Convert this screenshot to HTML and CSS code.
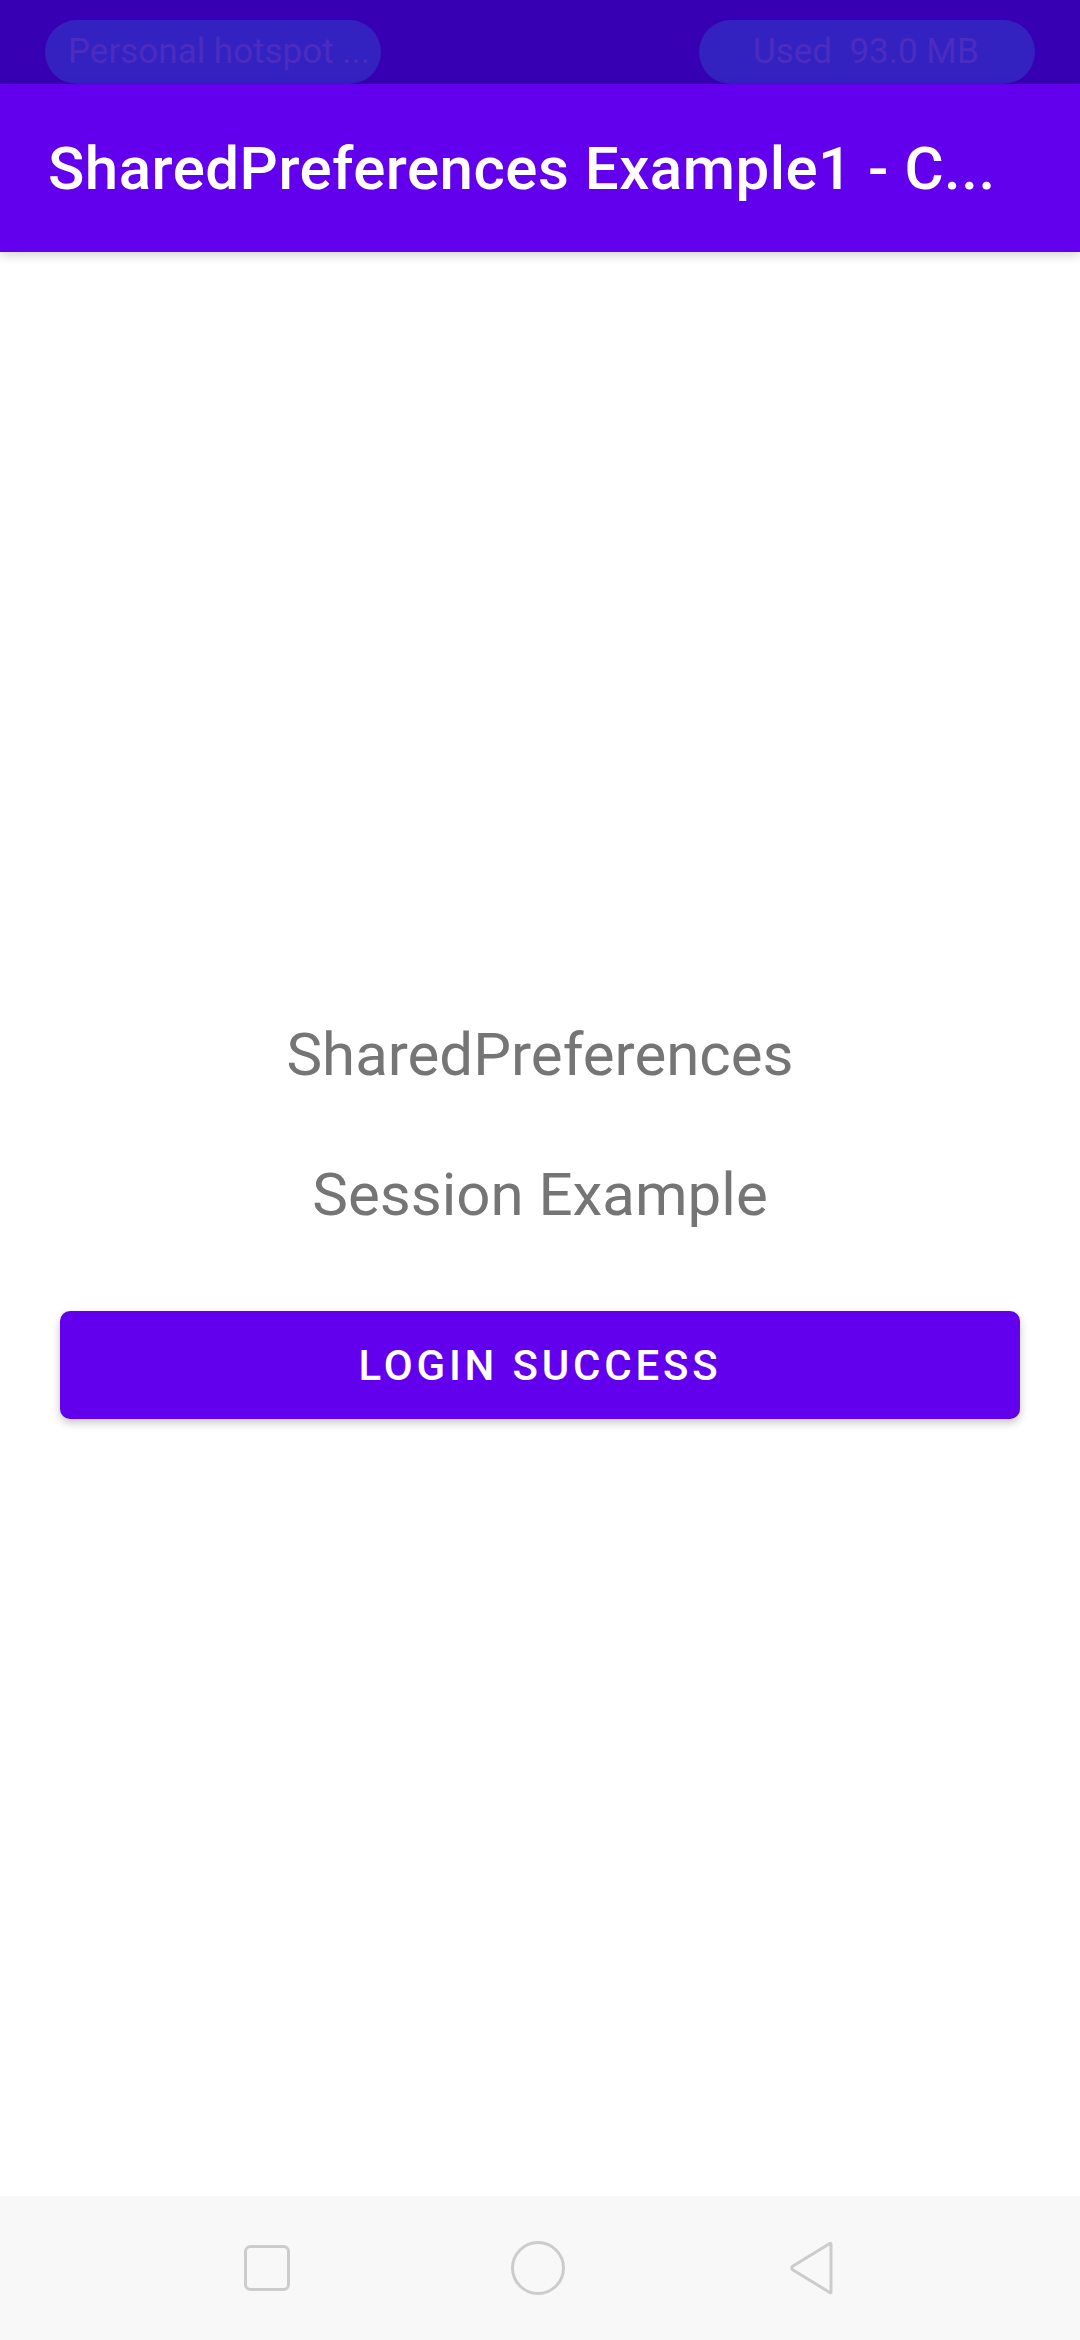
FILE: index.html
```html
<!DOCTYPE html>
<html>
<head>
<meta charset="utf-8">
<link rel="stylesheet" href="styles.css">
</head>
<body>
<div class="screen">
  <div class="status">
    <div class="pill pill-left">Personal hotspot ...</div>
    <div class="pill pill-right">Used&nbsp; 93.0 MB</div>
  </div>
  <header class="appbar">
    <div class="title">SharedPreferences Example1 - C...</div>
  </header>
  <main class="content">
    <div class="label first">SharedPreferences</div>
    <div class="label second">Session Example</div>
    <button class="btn">LOGIN SUCCESS</button>
  </main>
  <nav class="navbar">
    <svg class="nav-icon" width="46" height="46" viewBox="0 0 46 46"><rect x="1.5" y="1.5" width="43" height="43" rx="5" fill="none" stroke="#cccccc" stroke-width="3"/></svg>
    <svg class="nav-icon" width="56" height="56" viewBox="0 0 56 56"><circle cx="28" cy="28" r="25.5" fill="none" stroke="#cccccc" stroke-width="3"/></svg>
    <svg class="nav-icon" width="50" height="56" viewBox="0 0 50 56"><path d="M44 4.5 L44 51.5 Q44 54 42 52 L6 30 Q3.5 28 6 26 L42 4 Q44 2.5 44 4.5 Z" fill="none" stroke="#cccccc" stroke-width="3" stroke-linejoin="round"/></svg>
  </nav>
</div>
</body>
</html>
```

FILE: styles.css
```css
* { box-sizing: border-box; }
html, body { margin: 0; padding: 0; }
body { font-family: Roboto, "Noto Sans", sans-serif; background: #ffffff; }
.screen { width: 1080px; height: 2340px; display: flex; flex-direction: column; overflow: hidden; }
.status {
  height: 84px; background: #3700b3;
  display: flex; justify-content: space-between; align-items: flex-start;
  padding: 20px 45px 0 45px;
}
.pill {
  height: 64px; border-radius: 32px; background: #3322c0;
  color: #4a2cc2; font-size: 35px; line-height: 64px;
  white-space: nowrap;
}
.pill-left { width: 336px; padding-left: 23px; }
.pill-right { width: 336px; padding-left: 54px; }
.appbar {
  height: 168px; background: #6200ee;
  display: flex; align-items: center; padding: 0 48px;
  box-shadow: 0 3px 10px rgba(0,0,0,0.18);
  position: relative; z-index: 1;
}
.title { color: #ffffff; font-size: 60px; font-weight: 500; white-space: nowrap; letter-spacing: 0.5px; }
.content {
  flex: 1; display: flex; flex-direction: column; align-items: center;
  padding: 0 60px;
}
.label { color: #757575; font-size: 60px; line-height: 70px; }
.label.first { margin-top: 768px; }
.label.second { margin-top: 70px; }
.btn {
  margin-top: 81px; width: 960px; height: 108px;
  background: #6200ee; color: #ffffff; border: none; border-radius: 10px;
  font-family: Roboto, sans-serif; font-size: 42px; font-weight: 500; letter-spacing: 3.8px;
  box-shadow: 0 4px 8px rgba(0,0,0,0.22);
}
.navbar {
  height: 144px; background: #f8f8f8;
  display: flex; align-items: center; justify-content: center;
}
.nav-icon { display: block; }
.nav-icon:nth-child(1) { margin-right: 220px; }
.nav-icon:nth-child(3) { margin-left: 221px; }
```
